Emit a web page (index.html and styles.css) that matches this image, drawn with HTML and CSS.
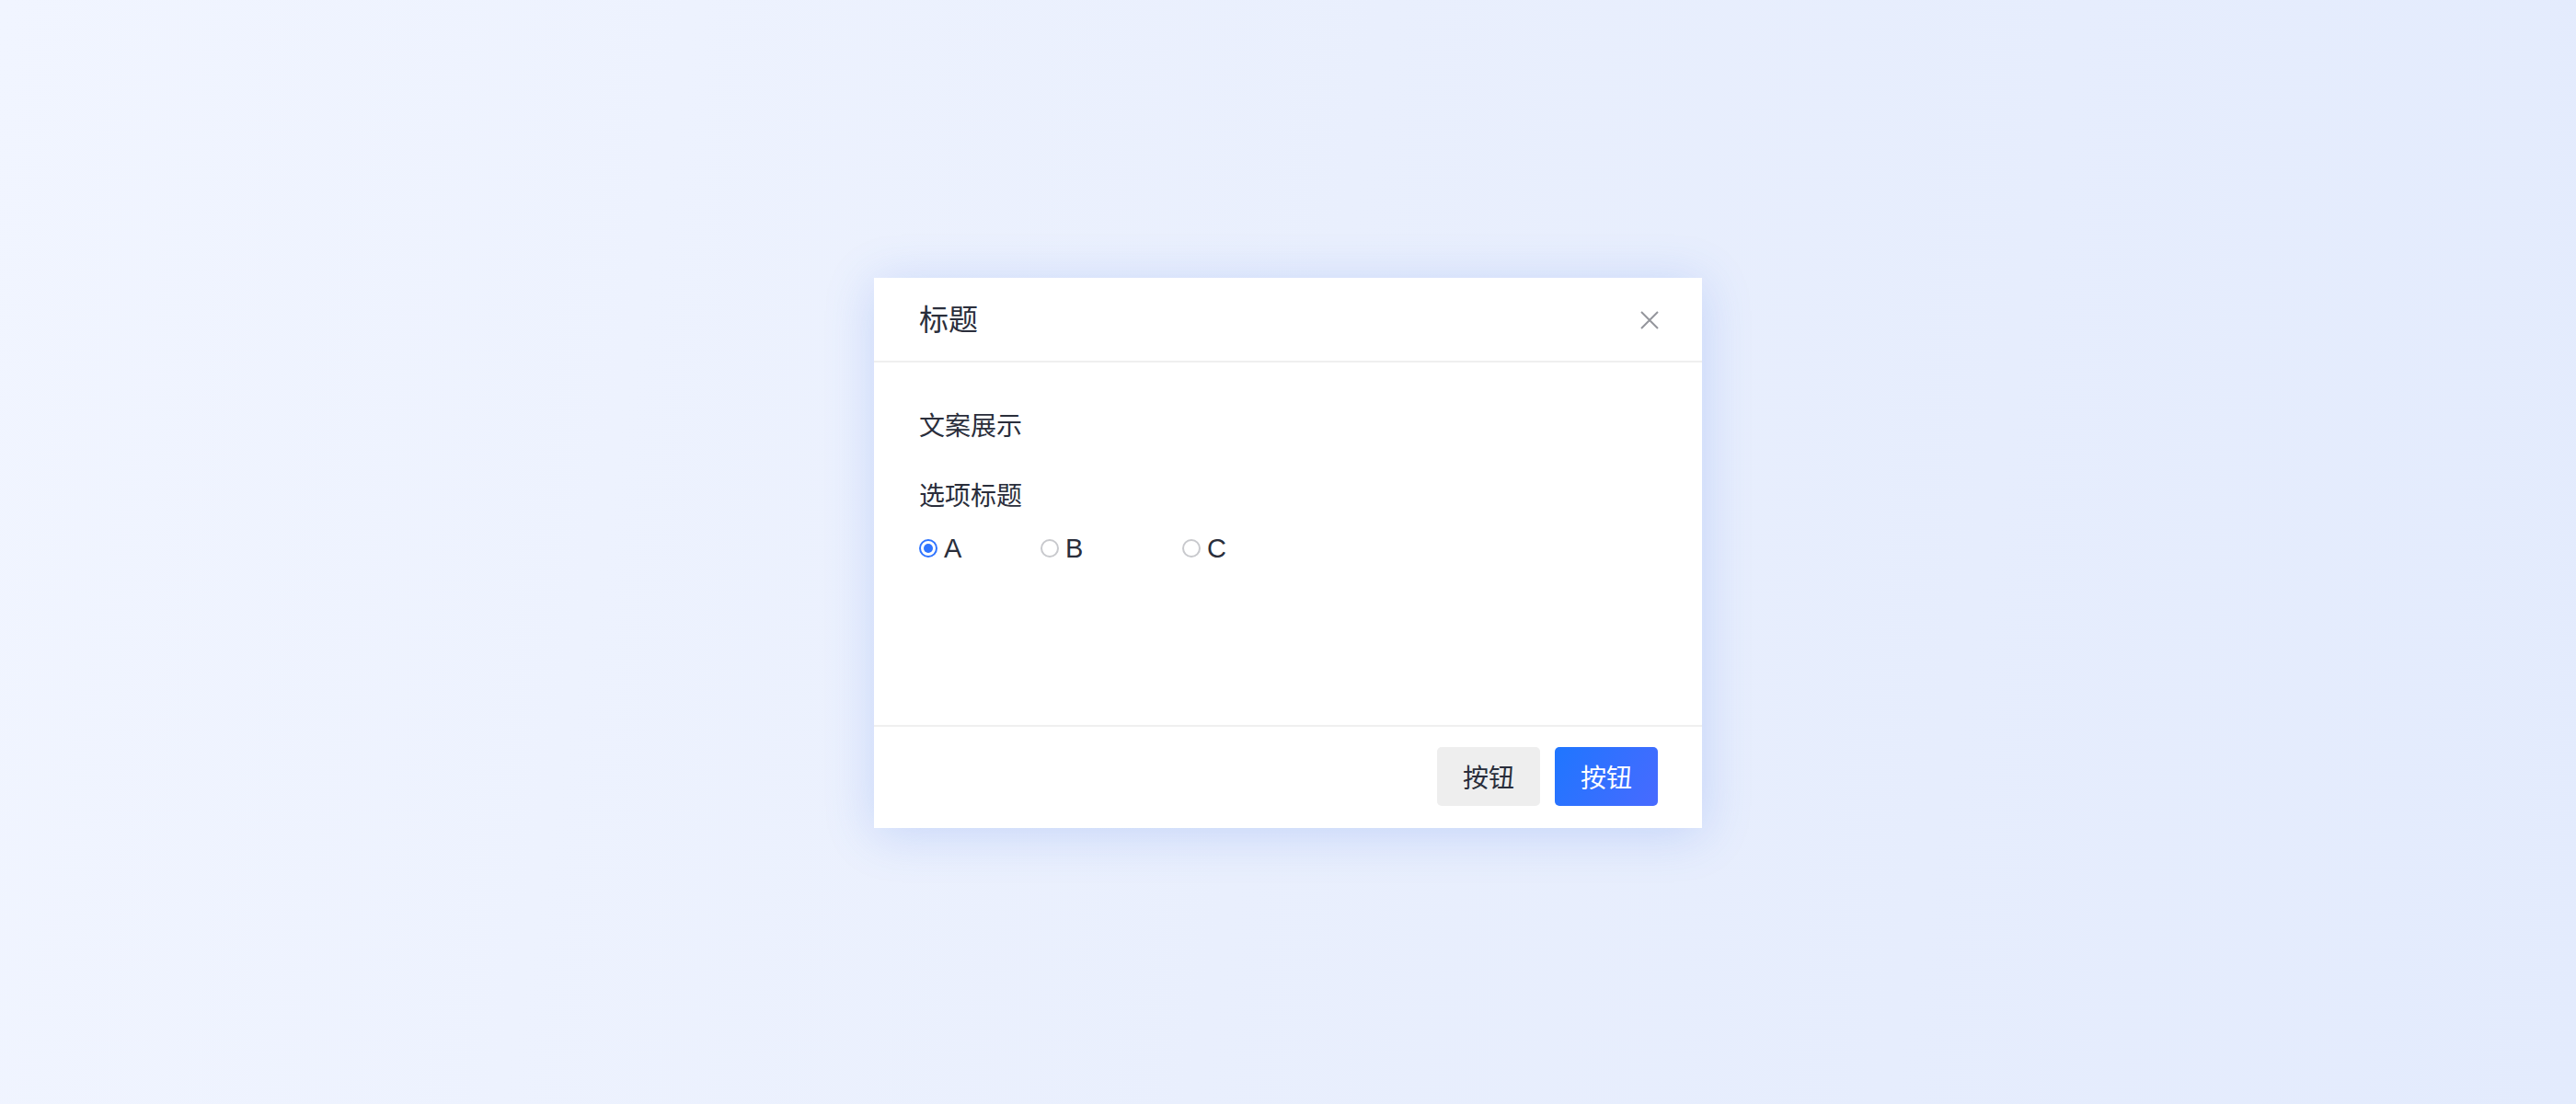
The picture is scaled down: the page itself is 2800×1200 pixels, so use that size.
FILE: index.html
```html
<!DOCTYPE html>
<html lang="zh-CN">
<head>
    <meta charset="UTF-8">
    <title>对话框</title>
    <link rel="stylesheet" href="styles.css">
</head>
<body>
    <div class="dialog">
        <div class="dialog-header">
            <span class="dialog-title">标题</span>
            <button class="dialog-close" aria-label="关闭">
                <svg width="20" height="20" viewBox="0 0 20 20">
                    <path d="M1 1L19 19M19 1L1 19" stroke="#94969c" stroke-width="2" fill="none"/>
                </svg>
            </button>
        </div>

        <div class="dialog-body">
            <p class="dialog-text">文案展示</p>
            <p class="group-title">选项标题</p>
            <div class="radio-group">
                <label class="radio checked"><span class="radio-dot"></span>A</label>
                <label class="radio"><span class="radio-dot"></span>B</label>
                <label class="radio"><span class="radio-dot"></span>C</label>
            </div>
        </div>

        <div class="dialog-footer">
            <button class="btn btn-secondary">按钮</button>
            <button class="btn btn-primary">按钮</button>
        </div>
    </div>
</body>
</html>
```

FILE: styles.css
```css
html, body {
    height: 100%;
}
body {
    margin: 0;
    font-family: 'Liberation Sans', 'Noto Sans CJK SC', sans-serif;
    color: #2a2e3b;
    background: linear-gradient(100deg, #f1f5ff 0%, #e9effd 50%, #e3ebfd 100%);
    display: flex;
    justify-content: center;
    align-items: flex-start;
}
.dialog {
    margin-top: 302px;
    width: 900px;
    background-color: #ffffff;
    box-shadow: 0 6px 50px rgba(70, 120, 230, 0.22);
}
.dialog-header {
    height: 92px;
    box-sizing: border-box;
    padding: 2px 47px 0 49px;
    display: flex;
    align-items: center;
    justify-content: space-between;
    border-bottom: 2px solid #efefef;
}
.dialog-title {
    font-size: 32px;
    line-height: 44px;
}
.dialog-close {
    border: none;
    background: none;
    padding: 0;
    width: 20px;
    height: 20px;
    cursor: pointer;
    display: flex;
}
.dialog-body {
    height: 394px;
    box-sizing: border-box;
    padding: 50px 49px;
    font-size: 28px;
    line-height: 40px;
}
.dialog-text {
    margin: 0 0 36px;
}
.group-title {
    margin: 0 0 16px;
}
.radio-group {
    display: grid;
    grid-template-columns: 132px 154px auto;
}
.radio {
    display: flex;
    align-items: center;
    gap: 7px;
    font-size: 29px;
    cursor: pointer;
}
.radio-dot {
    width: 20px;
    height: 20px;
    box-sizing: border-box;
    border: 2px solid #c8c9cd;
    border-radius: 50%;
    display: flex;
    align-items: center;
    justify-content: center;
}
.radio.checked .radio-dot {
    border-color: #2f74ff;
}
.radio.checked .radio-dot::after {
    content: '';
    width: 10px;
    height: 10px;
    border-radius: 50%;
    background-color: #2f74ff;
}
.dialog-footer {
    border-top: 2px solid #efefef;
    padding: 22px 48px 24px;
    display: flex;
    justify-content: flex-end;
    gap: 16px;
}
.btn {
    width: 112px;
    height: 64px;
    border: none;
    border-radius: 5px;
    font-family: inherit;
    font-size: 28px;
    cursor: pointer;
}
.btn-secondary {
    background-color: #eeeeee;
    color: #2a2e3b;
}
.btn-primary {
    background: linear-gradient(120deg, #1f76ff 0%, #486aff 100%);
    color: #ffffff;
}
```
